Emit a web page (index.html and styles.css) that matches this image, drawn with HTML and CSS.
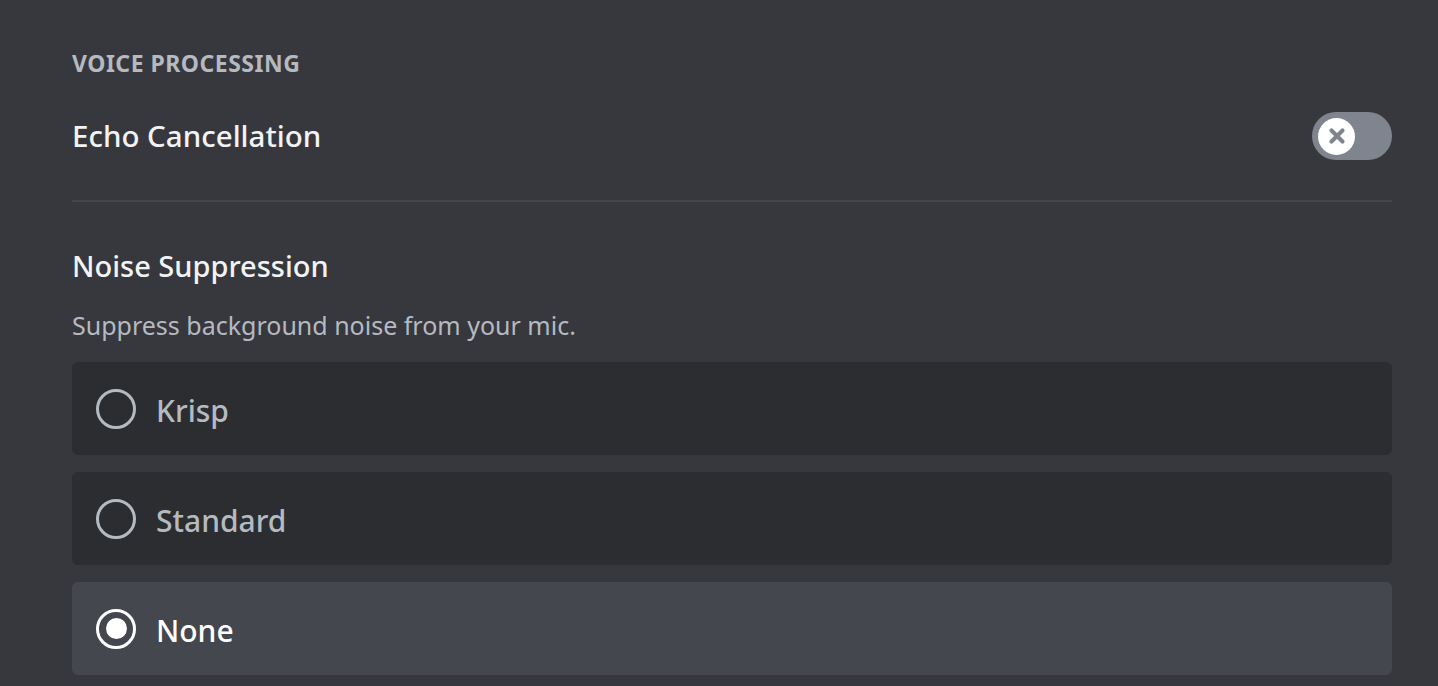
FILE: index.html
```html
<!DOCTYPE html>
<html>
<head>
<meta charset="utf-8">
<link rel="stylesheet" href="styles.css">
</head>
<body>
<main class="page">
  <h2 class="section-title">VOICE PROCESSING</h2>
  <div class="setting-row">
    <div class="setting-label">Echo Cancellation</div>
    <div class="toggle" role="switch" aria-checked="false">
      <span class="knob">
        <svg viewBox="0 0 20 20" width="20" height="20"><path d="M4.5 4.5 L15.5 15.5 M15.5 4.5 L4.5 15.5" stroke="#80848e" stroke-width="4.2" stroke-linecap="round" fill="none"/></svg>
      </span>
    </div>
  </div>
  <div class="divider"></div>
  <div class="setting-label ns-title">Noise Suppression</div>
  <div class="description">Suppress background noise from your mic.</div>
  <div class="radio-group">
    <div class="radio-item">
      <span class="radio"></span>
      <span class="radio-label">Krisp</span>
    </div>
    <div class="radio-item">
      <span class="radio"></span>
      <span class="radio-label">Standard</span>
    </div>
    <div class="radio-item selected">
      <span class="radio"><span class="dot"></span></span>
      <span class="radio-label">None</span>
    </div>
  </div>
</main>
</body>
</html>
```
FILE: styles.css
```css
html, body {
  margin: 0;
  padding: 0;
  background: #37383d;
  height: 100%;
  overflow: hidden;
}
body {
  font-family: "Noto Sans", "Open Sans", sans-serif;
}
.page {
  padding: 48px 46px 0 72px;
}
.section-title {
  margin: 0;
  font-size: 23px;
  font-weight: 700;
  letter-spacing: 0.5px;
  color: #b5bac1;
  line-height: 30px;
}
.setting-row {
  display: flex;
  align-items: center;
  justify-content: space-between;
  margin-top: 34px;
  height: 48px;
}
.setting-label {
  font-size: 29.5px;
  font-weight: 500;
  color: #f2f3f5;
  line-height: 40px;
}
.ns-title {
  font-size: 29px;
  margin-top: 44px;
}
.toggle {
  width: 80px;
  height: 48px;
  border-radius: 24px;
  background: #80848e;
  display: flex;
  align-items: center;
  padding-left: 6px;
  box-sizing: border-box;
}
.knob {
  width: 37px;
  height: 37px;
  border-radius: 50%;
  background: #fff;
  display: flex;
  align-items: center;
  justify-content: center;
}
.divider {
  height: 2px;
  background: #45464c;
  margin-top: 40px;
}
.description {
  margin-top: 22px;
  font-size: 25px;
  color: #b5bac1;
  line-height: 34px;
}
.radio-group {
  margin-top: 20px;
  display: flex;
  flex-direction: column;
  gap: 17px;
}
.radio-item {
  height: 93px;
  background: #2b2d31;
  border-radius: 6px;
  display: flex;
  align-items: center;
  padding-left: 24px;
}
.radio-item.selected {
  background: #45474e;
}
.radio {
  width: 40px;
  height: 40px;
  box-sizing: border-box;
  border: 3.5px solid #b5bac1;
  border-radius: 50%;
  display: flex;
  align-items: center;
  justify-content: center;
}
.selected .radio {
  border-color: #fff;
}
.dot {
  width: 21px;
  height: 21px;
  border-radius: 50%;
  background: #fff;
}
.radio-label {
  margin-left: 20px;
  font-size: 30px;
  font-weight: 500;
  color: #b5bac1;
  padding-top: 4px;
}
.selected .radio-label {
  color: #fff;
}
```
